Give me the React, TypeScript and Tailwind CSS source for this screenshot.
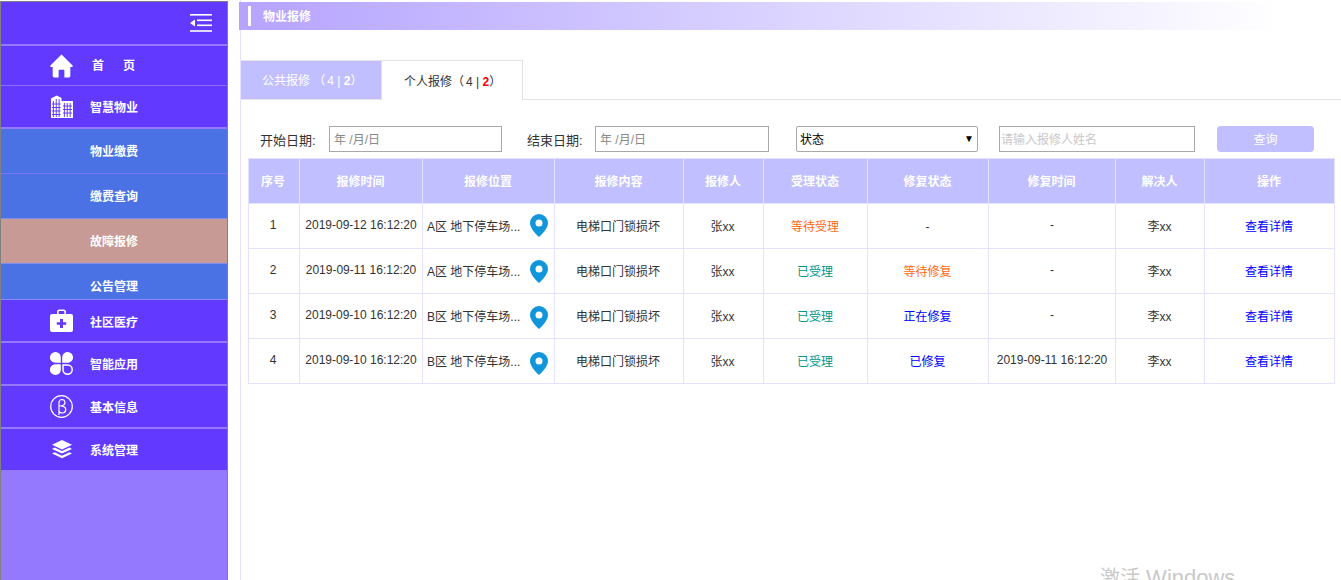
const font = '[font-family:"Liberation_Sans","Noto_Sans_CJK_SC",sans-serif]'

function CollapseIcon() {
  return (
    <svg width="22" height="18" viewBox="0 0 22 18" fill="#fff">
      <rect x="0" y="0" width="22" height="1.6" />
      <rect x="7" y="5.5" width="15" height="1.6" />
      <rect x="7" y="10.5" width="15" height="1.6" />
      <rect x="0" y="16.2" width="22" height="1.6" />
      <path d="M0 9l5-3.6v7.2z" />
    </svg>
  )
}

function HomeIcon() {
  return (
    <svg width="23" height="24" viewBox="0 0 24 24" fill="#fff" preserveAspectRatio="none">
      <path d="M12 0.5L0.5 11.5c-.6.7-.2 1.6.7 1.6h1.6v8.6c0 1 .8 1.8 1.8 1.8h4.4v-6.7c0-.6.4-1 1-1h4c.6 0 1 .4 1 1v6.7h4.4c1 0 1.8-.8 1.8-1.8v-8.6h1.6c.9 0 1.3-.9.7-1.6z" />
    </svg>
  )
}

function BuildingIcon() {
  return (
    <svg width="22" height="23" viewBox="0 0 23 23" fill="#fff" preserveAspectRatio="none">
      <path d="M0 3.5L6 0.5l5 2.5V6h12v17H0z" />
      <g stroke="#6239ff" strokeWidth="1">
        <path d="M2.5 6v16M5.5 4v18M8.5 4v18M14 8v14M17 8v14M20 8v14" />
        <path d="M1 9h9M1 12.5h9M1 16h9M1 19.5h9M12.5 11h9.5M12.5 14.5h9.5M12.5 18h9.5" />
      </g>
    </svg>
  )
}

function MedkitIcon() {
  return (
    <svg width="23" height="23" viewBox="0 0 23 23" fill="#fff">
      <path d="M7 5V3a2.5 2.5 0 0 1 2.5-2.5h4A2.5 2.5 0 0 1 16 3v2h-1.6V3a.9.9 0 0 0-.9-.9h-4a.9.9 0 0 0-.9.9v2z" />
      <path fillRule="evenodd" d="M2 5h19a2 2 0 0 1 2 2v14a2 2 0 0 1-2 2H2a2 2 0 0 1-2-2V7a2 2 0 0 1 2-2zm8 5v3.2H6.8v2.6H10V19h3v-3.2h3.2v-2.6H13V10z" />
    </svg>
  )
}

function CloverIcon() {
  return (
    <svg width="23" height="23" viewBox="0 0 23 23" fill="#fff">
      <path d="M5.5 0A5.2 5.2 0 0 1 10.8 5.2v5.6H5.2A5.2 5.2 0 0 1 5.5 0z" />
      <path d="M17.5 0A5.2 5.2 0 0 0 12.2 5.2v5.6h5.6A5.2 5.2 0 0 0 17.5 0z" />
      <path d="M5.5 23a5.2 5.2 0 0 0 5.3-5.2v-5.6H5.2A5.4 5.4 0 0 0 5.5 23z" />
      <path d="M13 13h4.6a4.6 4.6 0 1 1-4.6 4.6z" fill="none" stroke="#fff" strokeWidth="1.5" />
    </svg>
  )
}

function BetaIcon() {
  return (
    <svg width="23" height="23" viewBox="0 0 23 23" fill="none" stroke="#fff" strokeWidth="1.2">
      <circle cx="11.5" cy="11.5" r="10.8" />
      <path d="M9 20V7.5A3 3 0 0 1 12 4.5a3 3 0 0 1 1 5.8L11 11l2.2.5a3.3 3.3 0 0 1-1 6.5c-1.3 0-2.4-.6-3.2-1.5" />
    </svg>
  )
}

function LayersIcon() {
  return (
    <svg width="20" height="19" viewBox="0 0 20 19" fill="#fff">
      <path d="M10 0l10 4.7-10 4.7L0 4.7z" />
      <path d="M2.6 7.6L10 11.1l7.4-3.5 2.6 1.3-10 4.7-10-4.7z" />
      <path d="M2.6 12.2L10 15.7l7.4-3.5 2.6 1.3L10 18.2 0 13.5z" />
    </svg>
  )
}

function Pin({ className }: { className: string }) {
  return (
    <svg className={className} width="18" height="23" viewBox="0 0 18 23" fill="#1296db">
      <path fillRule="evenodd" d="M9 0a9 9 0 0 1 9 9c0 5-5.5 10.8-9 14C5.5 19.8 0 14 0 9a9 9 0 0 1 9-9zm0 5.5a3.5 3.5 0 1 0 0 7 3.500 3.500 0 0 0 0-7z" />
    </svg>
  )
}

function NavItem({
  icon,
  label,
  className,
  labelClass = 'pt-[2px]',
}: {
  icon: React.ReactNode
  label: React.ReactNode
  className: string
  labelClass?: string
}) {
  return (
    <div className={`flex items-center bg-[#6239ff] pl-[48px] ${className}`}>
      <div className="flex w-[25px] justify-center">{icon}</div>
      <div className={`ml-[16px] text-xs font-bold text-white ${labelClass}`}>{label}</div>
    </div>
  )
}

function SubItem({ label, className }: { label: string; className: string }) {
  return (
    <div className={`h-[45px] shrink-0 pl-[89px] pt-[15px] text-xs font-bold text-white ${className}`}>{label}</div>
  )
}

function Sidebar() {
  return (
    <div className="mt-px flex h-[579px] w-[228px] shrink-0 flex-col border-x border-t border-x-[#808080] border-t-[#808080] bg-[#9479ff]">
      <div className="flex h-[44px] shrink-0 items-center justify-end border-b-2 border-[#9479ff] bg-[#6239ff] pr-[15px]">
        <CollapseIcon />
      </div>
      <NavItem
        className="h-[40px] border-b border-[#8a6cff]"
        labelClass="pt-0"
        icon={<HomeIcon />}
        label={
          <span className="flex gap-[19px] pl-[2px]">
            <span>首</span>
            <span>页</span>
          </span>
        }
      />
      <NavItem className="h-[43px] border-b-2 border-[#9479ff]" icon={<BuildingIcon />} label="智慧物业" />
      <div className="flex h-[171px] shrink-0 flex-col overflow-hidden border-b border-[#8f86ff]">
        <SubItem className="border-b border-[#7d74f0] bg-[#4a72e4]" label="物业缴费" />
        <SubItem className="border-b border-[#7d8df0] bg-[#4a72e4]" label="缴费查询" />
        <SubItem className="border-b border-[#7d8df0] bg-[#c89a96]" label="故障报修" />
        <SubItem className="bg-[#4a72e4]" label="公告管理" />
      </div>
      <NavItem className="h-[43px] border-b-2 border-[#9479ff]" labelClass="pt-[4px]" icon={<MedkitIcon />} label="社区医疗" />
      <NavItem className="h-[43px] border-b-2 border-[#9479ff]" icon={<CloverIcon />} label="智能应用" />
      <NavItem className="h-[43px] border-b-2 border-[#9479ff]" icon={<BetaIcon />} label="基本信息" />
      <NavItem className="h-[41px]" icon={<LayersIcon />} label="系统管理" />
    </div>
  )
}

const columns = ['序号', '报修时间', '报修位置', '报修内容', '报修人', '受理状态', '修复状态', '修复时间', '解决人', '操作']

const orange = 'text-[#ff6a13]'
const green = 'text-[#009688]'
const blue = 'text-[#0000ff]'

const rows = [
  { no: 1, time: '2019-09-12 16:12:20', area: 'A区', accept: '等待受理', acceptColor: orange, fix: '-', fixColor: '', fixed: '-', pin: '-mt-[2px]' },
  { no: 2, time: '2019-09-11 16:12:20', area: 'A区', accept: '已受理', acceptColor: green, fix: '等待修复', fixColor: orange, fixed: '-', pin: 'mt-0' },
  { no: 3, time: '2019-09-10 16:12:20', area: 'B区', accept: '已受理', acceptColor: green, fix: '正在修复', fixColor: blue, fixed: '-', pin: 'mt-[2px]' },
  { no: 4, time: '2019-09-10 16:12:20', area: 'B区', accept: '已受理', acceptColor: green, fix: '已修复', fixColor: blue, fixed: '2019-09-11 16:12:20', pin: 'mt-[4px]' },
]

const cell = 'border border-[#e4e2ff] pr-[2px] pt-[2px]'
const cellNear = 'border border-[#e4e2ff] pr-[1px] pt-[2px]'

function RepairTable() {
  return (
    <table className="ml-[7px] w-[1086px] table-fixed border-collapse text-center text-xs text-[#333]">
      <colgroup>
        <col className="w-[51px]" />
        <col className="w-[123px]" />
        <col className="w-[132px]" />
        <col className="w-[129px]" />
        <col className="w-[80px]" />
        <col className="w-[104px]" />
        <col className="w-[121px]" />
        <col className="w-[127px]" />
        <col className="w-[89px]" />
        <col className="w-[130px]" />
      </colgroup>
      <thead>
        <tr className="h-[45px] bg-[#c1bfff]">
          {columns.map((c, i) => (
            <th key={c} className={`${i === 0 ? cell : cellNear} font-bold text-white`}>
              {c}
            </th>
          ))}
        </tr>
      </thead>
      <tbody>
        {rows.map((r) => (
          <tr key={r.no} className="h-[45px]">
            <td className="border border-[#e4e2ff] pb-[2px] pr-[2px]">{r.no}</td>
            <td className="border border-[#e4e2ff] pb-[2px]">{r.time}</td>
            <td className="border border-[#e4e2ff] pl-[4px] text-left">
              <div className="flex items-center">
                <span className="w-[103px] whitespace-nowrap pt-[2px]">{r.area} 地下停车场...</span>
                <Pin className={r.pin} />
              </div>
            </td>
            <td className={cell}>电梯口门锁损坏</td>
            <td className={cell}>张xx</td>
            <td className={`${cellNear} ${r.acceptColor}`}>{r.accept}</td>
            <td className={`${cellNear} ${r.fixColor}`}>{r.fix}</td>
            <td className="border border-[#e4e2ff] pb-[2px]">{r.fixed}</td>
            <td className={cellNear}>李xx</td>
            <td className={`${cellNear} text-[#0000ff]`}>查看详情</td>
          </tr>
        ))}
      </tbody>
    </table>
  )
}

export default function App() {
  return (
    <div className={`relative flex h-[580px] w-[1341px] overflow-hidden bg-white ${font}`}>
      <Sidebar />
      <div className="ml-[12px] min-w-0 flex-1 border-l border-[#e4e2ff]">
        <div className="-ml-[2px] mt-[2px] flex h-[28px] w-[1042px] items-center bg-gradient-to-r from-[#b6a3ff] to-white pl-[9px]">
          <div className="h-[20px] w-[3px] bg-white" />
          <div className="ml-[12px] pt-[2px] text-xs font-bold text-white">物业报修</div>
        </div>

        <div className="mt-[30px] flex h-[40px] border-b border-[#e3e3e3] text-xs">
          <div className="flex w-[140px] items-center border-t border-[#e3e3e3] bg-[#c1bfff] pl-[21px] pt-[2px] text-white">
            <span>
              公共报修 （<span className="ml-[2px]">4 | <b>2</b></span>）
            </span>
          </div>
          <div className="-mb-px flex w-[142px] items-center border-x border-t border-[#e3e3e3] bg-white pl-[22px] pt-[2px] text-[#333]">
            <span>
              个人报修（<span className="ml-[2px]">4 | <b className="text-[#ff0000]">2</b></span>）
            </span>
          </div>
        </div>

        <div className="mt-[26px] flex h-[26px] items-center pl-[20px] text-[13px] text-[#333]">
          <span className="w-[68px] -translate-x-px pt-[4px]">开始日期:</span>
          <input
            readOnly
            placeholder="年 /月/日"
            className="h-[26px] w-[173px] border border-[#a9a9a9] px-[4px] pt-[2px] text-xs outline-none placeholder:text-[#888]"
          />
          <span className="ml-[25px] w-[68px] pt-[4px]">结束日期:</span>
          <input
            readOnly
            placeholder="年 /月/日"
            className="h-[26px] w-[174px] border border-[#a9a9a9] px-[4px] pt-[2px] text-xs outline-none placeholder:text-[#888]"
          />
          <div className="ml-[27px] flex h-[26px] w-[182px] items-center justify-between rounded-[2px] border border-[#a9a9a9] pl-[3px] pr-[3px] pt-[2px] text-xs text-black">
            <span>状态</span>
            <span className="-translate-y-px text-[10px]">▼</span>
          </div>
          <input
            readOnly
            placeholder="请输入报修人姓名"
            className="ml-[21px] h-[26px] w-[196px] border border-[#a9a9a9] px-[1px] pt-[2px] text-xs outline-none placeholder:text-[#c8c8c8]"
          />
          <button type="button" className="ml-[22px] h-[26px] w-[97px] rounded-[4px] bg-[#c1bfff] pt-[2px] text-xs text-white">
            查询
          </button>
        </div>

        <div className="mt-[6px]">
          <RepairTable />
        </div>
      </div>

      <div className="absolute left-[1100px] top-[563px] text-[22px] leading-[30px] text-[#c9c9c9]">
        <span className="text-xl">激活</span> Windows
      </div>
    </div>
  )
}
